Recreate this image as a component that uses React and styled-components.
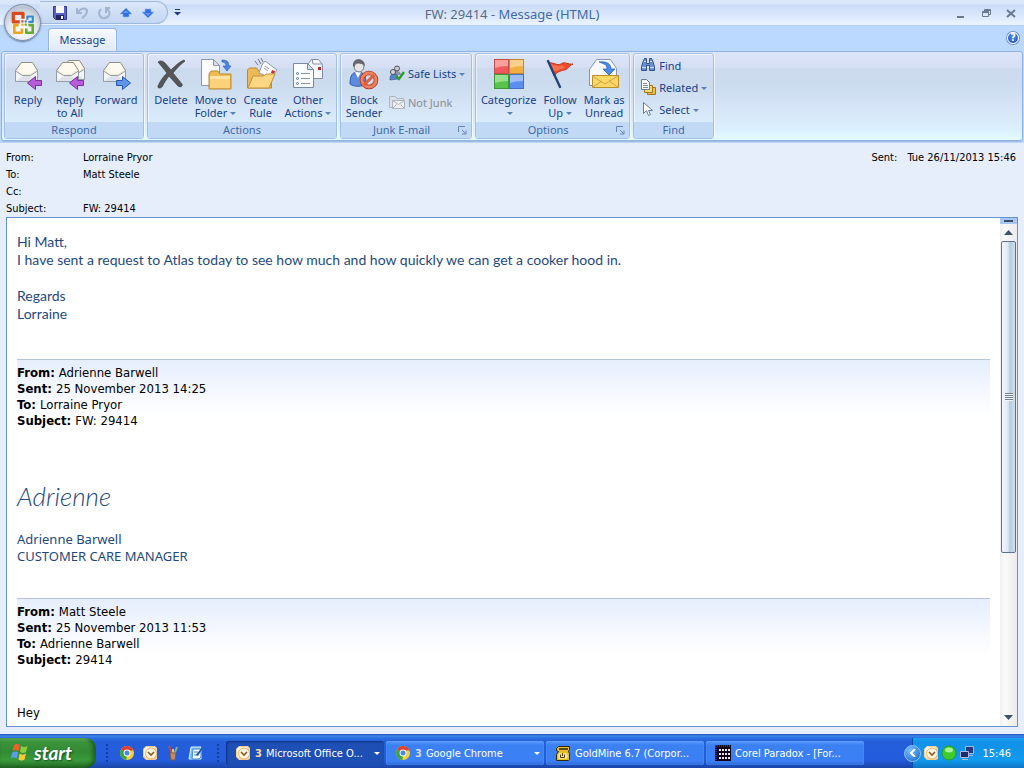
import React from 'react';
import styled, { createGlobalStyle } from 'styled-components';

const GlobalStyle = createGlobalStyle`
  * {
    box-sizing: border-box;
  }

  body {
    background: #e6edfb;
    font-family: 'DejaVu Sans Condensed', 'DejaVu Sans', sans-serif;
    font-size: 11px;
    margin: 0;
  }

  button {
    background: none;
    border: none;
    color: inherit;
    font: inherit;
    margin: 0;
    padding: 0;
  }

  svg {
    display: block;
    flex: none;
  }
`;

const Desktop = styled.div`
  display: flex;
  flex-flow: column nowrap;
  height: 100vh;
  overflow: hidden;
`;

/* Title bar */

const TitleBar = styled.header`
  align-items: center;
  background: linear-gradient(#dbe7fc 0, #dbe6fb 4px, #c9dcf8 5px, #d8e6fc 14px, #e9f2ff 24px);
  border-bottom: 1px solid #b0d0f8;
  display: grid;
  grid-template-columns: 1fr auto 1fr;
  height: 26px;
  position: relative;
`;

const QuickAccess = styled.div`
  align-items: center;
  align-self: start;
  display: flex;
  gap: 6px;
`;

const QuickTools = styled.div`
  align-items: center;
  background: linear-gradient(#dce7f9, #c3d6f2);
  border: 1px solid #9fb9de;
  border-left: none;
  border-radius: 0 12px 12px 0;
  display: flex;
  gap: 6px;
  height: 23px;
  margin-left: 40px;
  margin-top: 1px;
  padding: 0 11px 0 12px;
`;

const OfficeButton = styled.button`
  background: radial-gradient(circle at 50% 70%, #ffffff 0, #e5e9f0 45%, #b9c3d2 75%, #e8edf5 100%);
  border: 1px solid #7b8ca8;
  border-radius: 50%;
  box-shadow: 0 1px 2px rgba(40, 60, 100, 0.6);
  display: grid;
  height: 37px;
  left: 4px;
  place-items: center;
  position: absolute;
  top: 4px;
  width: 37px;
  z-index: 2;
`;

const Title = styled.h1`
  color: #5a6b85;
  font-family: 'Noto Sans', sans-serif;
  font-size: 13px;
  font-weight: 400;
  margin: 0;
  padding-top: 3px;

  span {
    color: #3e6aaa;
  }
`;

const WindowButtons = styled.div`
  display: flex;
  gap: 13px;
  justify-content: flex-end;
  padding-right: 7px;
`;

/* Ribbon */

const TabStrip = styled.div`
  align-items: flex-end;
  background: #bbd9fe;
  display: flex;
  height: 25px;
  justify-content: space-between;
  padding: 0 5px 0 48px;
`;

const Tab = styled.button`
  background: linear-gradient(#f6faff, #dfe9fa);
  border: 1px solid #91b3e6;
  border-bottom: none;
  border-radius: 4px 4px 0 0;
  box-shadow: inset 0 1px 0 1px #ffffff;
  color: #15428b;
  font-family: 'Noto Sans', sans-serif;
  font-size: 11px;
  height: 23px;
  padding-bottom: 2px;
  width: 69px;
`;

const HelpButton = styled.button`
  background: radial-gradient(circle at 50% 35%, #5b93ee, #1546b5);
  border: 1px solid #ffffff;
  border-radius: 50%;
  box-shadow: 0 0 0 1px #6f8fc8;
  color: #ffffff;
  font-size: 10px;
  font-weight: 700;
  height: 12px;
  line-height: 10px;
  margin-bottom: 7px;
  width: 12px;
`;

const Ribbon = styled.nav`
  background: linear-gradient(#dce5f8 0, #d7dff5 15px, #cbdaec 17px, #ccddef 36px, #d5e3f6 52px, #dbf0fe 78px, #e4fbff 88px);
  border: 1px solid #8fb2e3;
  border-radius: 3px;
  box-shadow: 0 1px 1px #9dbce8;
  display: flex;
  gap: 3px;
  height: 90px;
  margin: 0 1px;
  padding: 1px 2px;
`;

const RibbonArea = styled.div`
  background: #bfd9fb;
  padding-bottom: 2px;
`;

const Group = styled.section`
  border: 1px solid #a2bfe4;
  border-radius: 3px;
  box-shadow: inset 1px 1px 0 rgba(255, 255, 255, 0.6), 1px 0 0 rgba(255, 255, 255, 0.6);
  color: #15428b;
  display: flex;
  flex-flow: column nowrap;
  font-family: 'Noto Sans', sans-serif;
  height: 86px;
`;

const GroupBody = styled.div`
  display: flex;
  flex: 1;
  padding: 0 2px;
`;

const GroupLabel = styled.div`
  align-items: center;
  background: #c2d9f6;
  border-radius: 0 0 2px 2px;
  color: #3e6aaa;
  display: flex;
  height: 16px;
  line-height: 16px;
  padding: 0 4px;

  h2 {
    flex: 1;
    font-size: 11px;
    font-weight: 400;
    margin: 0;
    text-align: center;
  }
`;

const BigButton = styled.button`
  align-items: center;
  display: flex;
  flex-flow: column nowrap;
  line-height: 13px;
  padding-top: 4px;
  white-space: nowrap;
  width: ${(props) => props.$width}px;

  svg {
    margin-bottom: 3px;
  }
`;

const SmallColumn = styled.div`
  display: flex;
  flex-flow: column nowrap;
  gap: ${(props) => props.$gap}px;
  padding: ${(props) => props.$top}px 4px 0;
`;

const SmallButton = styled.button`
  align-items: center;
  display: flex;
  gap: 3px;
  height: 22px;
  white-space: nowrap;

  &:disabled {
    color: #8d8d8d;
  }
`;

const Caret = styled.i`
  border: 3px solid transparent;
  border-bottom: none;
  border-top-color: ${(props) => props.$color || '#5a7fb4'};
  display: inline-block;
  margin-left: 3px;
  vertical-align: 2px;
`;

/* Message header */

const MessageHeader = styled.div`
  display: flex;
  justify-content: space-between;
  line-height: 17px;
  padding: 6px 8px 0 6px;
`;

const Fields = styled.dl`
  display: grid;
  grid-auto-rows: 17px;
  grid-template-columns: ${(props) => props.$label}px auto;
  margin: 0;

  dd {
    margin: 0;
  }
`;

/* Message body */

const Reader = styled.main`
  background: #ffffff;
  border: 1px solid #6593cf;
  display: flex;
  flex: 1;
  margin: 0 6px 7px;
  min-height: 0;
`;

const Message = styled.article`
  flex: 1;
  overflow: hidden;
  padding: 15px 10px 0;

  p {
    margin: 0;
  }
`;

const Reply = styled.div`
  color: #1f497d;
  font-family: Lato, sans-serif;
  font-size: 14px;
  line-height: 18px;
  padding-bottom: 36px;

  p + p {
    margin-top: 18px;
  }
`;

const Quoted = styled.dl`
  background: linear-gradient(#e6eefd, #ffffff 56px);
  border-top: 1px solid #b5c4df;
  font-size: 13px;
  line-height: 16px;
  margin: 0;
  padding: 5px 0 0;

  div {
    display: flex;
    gap: 4px;
  }

  dt {
    font-weight: 700;
  }

  dd {
    margin: 0;
  }
`;

const Signature = styled.div`
  color: #1f497d;
  font-family: 'Noto Sans', sans-serif;
  font-size: 13px;
  line-height: 17px;
  padding: 52px 0 33px;
`;

const Handwriting = styled.p`
  font-family: Lato, sans-serif;
  font-size: 26px;
  font-style: italic;
  font-weight: 300;
  line-height: 30px;
  padding-bottom: 20px;
`;

const Plain = styled.p`
  font-size: 13px;
  line-height: 16px;
  padding-top: 37px;
`;

const Scrollbar = styled.div`
  background: linear-gradient(90deg, #f0f0f0, #fbfafa 30%, #ebebeb);
  display: flex;
  flex-flow: column nowrap;
  width: 17px;
`;

const SplitHandle = styled.div`
  background: #a9c7f3;
  height: 6px;
  padding: 2px 4px;

  &::after {
    background: #384c6e;
    content: '';
    display: block;
    height: 2px;
  }
`;

const ScrollArrow = styled.button`
  display: grid;
  height: 17px;
  place-items: center;
`;

const Track = styled.div`
  flex: 1;
`;

const Thumb = styled.div`
  align-items: center;
  background: linear-gradient(90deg, #f2f6fb, #dfe8f2 45%, #b7cbdf 60%, #cfdfee);
  border: 1px solid #5f6f94;
  border-radius: 2px;
  display: flex;
  justify-content: center;
  margin: 0 1px;
`;

const Grip = styled.i`
  background: repeating-linear-gradient(#75808f 0 1px, #f2f6fa 1px 2px);
  height: 8px;
  width: 8px;
`;

/* Taskbar */

const Taskbar = styled.footer`
  background: linear-gradient(#1c54b5 0, #3d85ea 2px, #2b70e0 4px, #245edb 8px, #235cdc 26px, #1a44a6 34px);
  color: #ffffff;
  display: flex;
  height: 34px;
`;

const StartButton = styled.button`
  align-items: center;
  background: linear-gradient(#6fbf6d 0, #3b933b 4px, #328a33 14px, #3a9a3a 22px, #246b25 30px);
  border-radius: 0 10px 10px 0;
  box-shadow: inset -3px 0 4px rgba(10, 60, 15, 0.6);
  display: flex;
  font-family: Lato, sans-serif;
  font-size: 19px;
  font-style: italic;
  font-weight: 700;
  gap: 4px;
  margin-top: 4px;
  padding-bottom: 2px;
  padding-left: 10px;
  text-shadow: 1px 1px 2px #174a18;
  width: 96px;
`;

const QuickLaunch = styled.div`
  align-items: center;
  display: flex;
  gap: 7px;
  padding: 3px 5px 0 9px;
`;

const LaunchIcons = styled.div`
  display: flex;
  gap: 7px;
  padding: 0 5px 0 2px;
`;

const Dots = styled.i`
  background: radial-gradient(circle, #173f9d 1px, transparent 1px) 0 0 / 4px 4px;
  height: 20px;
  width: 5px;
`;

const Tasks = styled.div`
  display: flex;
  flex: 1;
  gap: 2px;
  min-width: 0;
  padding: 7px 40px 3px 0;
`;

const Task = styled.button`
  align-items: center;
  background: ${(props) => (props.$active ? '#1d4fb5' : 'linear-gradient(#5a9bff, #3c81f3 4px, #3b80f4 20px, #2c69d8)')};
  border-radius: 3px;
  box-shadow: ${(props) => (props.$active ? 'inset 1px 1px 2px #0f2f7c' : 'inset 0 0 1px #9fc4ff')};
  display: flex;
  flex: 0 1 158px;
  gap: 4px;
  min-width: 0;
  padding: 0 4px 0 9px;

  b {
    color: ${(props) => (props.$active ? '#f7dca0' : '#d5d9e0')};
  }
`;

const TaskName = styled.span`
  flex: 1;
  overflow: hidden;
  text-align: left;
  white-space: nowrap;
`;

const Tray = styled.div`
  align-items: center;
  background: linear-gradient(#1aa4f0 0, #1290e8 4px, #109bee 22px, #0d73c4 30px);
  border-left: 1px solid #0a4fa8;
  display: flex;
  gap: 2px;
  margin-top: 4px;
  padding-right: 13px;

  time {
    margin-left: 5px;
  }
`;

const TrayToggle = styled.button`
  background: radial-gradient(circle at 35% 30%, #7cc0ff, #1260c8);
  border: 1px solid #8cc6f8;
  border-radius: 50%;
  display: grid;
  height: 17px;
  margin-left: -9px;
  place-items: center;
  width: 17px;
`;

/* Drawings */

function OfficeLogo() {
  return (
    <svg width="26" height="26" viewBox="0 0 24 24" fill="none" strokeLinejoin="round">
      <path d="M9 11H3V3h9v5" stroke="#d8491b" strokeWidth="3" />
      <path d="M16 9V6h5v5h-4" stroke="#2f8ccf" strokeWidth="2" />
      <path d="M8 14H4v7h7v-4" stroke="#eba51c" strokeWidth="2.4" />
      <path d="M15 17v4h6v-7h-4" stroke="#66a832" strokeWidth="2.4" />
      <path d="M11 10h1v1h-1z" stroke="#d8491b" />
      <path d="M14 10h1v1h-1z" stroke="#2f8ccf" />
      <path d="M11 13h1v1h-1z" stroke="#eba51c" />
      <path d="M14 13h1v1h-1z" stroke="#66a832" />
    </svg>
  );
}

function SaveIcon() {
  return (
    <svg width="16" height="16" viewBox="0 0 16 16">
      <path d="M1.5 1.5h13v13h-11l-2-2z" fill="#5a60c4" stroke="#34388f" />
      <path d="M4 1h8v7H4z" fill="#f4f7ff" />
      <path d="M4 10h8v5H4z" fill="#23265f" />
      <path d="M9 11h2v3H9z" fill="#fff" />
    </svg>
  );
}

function UndoIcon() {
  return (
    <svg width="16" height="16" viewBox="0 0 16 16" fill="none" stroke="#a3b4d0" strokeWidth="2">
      <path d="M4 7c4-5 9-4 9-1 0 3-2 5-5 7" />
      <path d="M3 3v5h5" />
    </svg>
  );
}

function RedoIcon() {
  return (
    <svg width="16" height="16" viewBox="0 0 16 16" fill="none" stroke="#a3b4d0" strokeWidth="2">
      <path d="M5 4c-4 4-1 10 4 9 5-1 6-6 2-9" />
      <path d="M14 3h-4v5" />
    </svg>
  );
}

function ArrowIcon({ down }) {
  return (
    <svg width="16" height="16" viewBox="0 0 16 16">
      <g transform={down ? 'rotate(180 8 8)' : undefined}>
        <path d="M8 3l6 6h-3v3H5V9H2z" fill="#2f6fe0" stroke="#8db4f2" strokeWidth=".6" />
        <path d="M8 5l3 3H5z" fill="#5f97f2" />
      </g>
    </svg>
  );
}

function OpenEnvelope({ x = 0, y = 0 }) {
  return (
    <g transform={`translate(${x} ${y})`}>
      <path d="M3.5 12.5l6-8h11l5 8v11h-22z" fill="#f3ead2" stroke="#8f8c80" />
      <path d="M5 12l5-7h10l4 7-6 4h-8z" fill="#fffaf0" />
      <path d="M3.500 13l7 4.500h8l7-4.500v10.500h-22z" fill="#f4f6fa" stroke="#959ca9" />
      <path d="M4 23l7-5h7l7 5z" fill="#dce1ea" />
    </g>
  );
}

function SideArrow({ left }) {
  return left ? (
    <path d="M29.500 22.500v5h-6v4l-8-6.500 8-6.500v4z" fill="#b65cd8" stroke="#7d2ea0" />
  ) : (
    <path d="M16.500 22.500v5h6v4l8-6.500-8-6.500v4z" fill="#5d95ea" stroke="#2757ae" />
  );
}

function ReplyIcon() {
  return (
    <svg width="32" height="32" viewBox="0 0 32 32">
      <OpenEnvelope />
      <SideArrow left />
    </svg>
  );
}

function ReplyAllIcon() {
  return (
    <svg width="32" height="32" viewBox="0 0 32 32">
      <OpenEnvelope x={5} y={-2} />
      <OpenEnvelope x={-1} />
      <SideArrow left />
    </svg>
  );
}

function ForwardIcon() {
  return (
    <svg width="32" height="32" viewBox="0 0 32 32">
      <OpenEnvelope />
      <SideArrow />
    </svg>
  );
}

function DeleteIcon() {
  return (
    <svg width="32" height="32" viewBox="0 0 32 32">
      <path
        d="M3 4c2-2 5-1 7 1l6 7c4-4 8-8 13-10l1 1c-4 3-8 7-12 12l9 11c1 2-1 4-4 2l-9-10c-3 4-5 7-7 11-2 2-5 1-4-1 2-5 5-9 9-13z"
        fill="#54565a"
        stroke="#323438"
        strokeWidth=".6"
      />
    </svg>
  );
}

function Folder({ x, y }) {
  return (
    <g transform={`translate(${x} ${y})`}>
      <path d="M0 4l2-3h7l2 3h11v15H0z" fill="#f0bb52" stroke="#b98a34" />
      <path d="M1 6h20v12H1z" fill="#fbd27a" />
      <path d="M1 6h20v3H1z" fill="#fee4a4" />
    </g>
  );
}

function MoveIcon() {
  return (
    <svg width="32" height="32" viewBox="0 0 32 32">
      <path d="M1.500 1.500h12l6 6v20h-18z" fill="#fbfcfe" stroke="#8b97ab" />
      <path d="M13.500 1.500v6h6z" fill="#d5dde9" stroke="#8b97ab" />
      <Folder x={9} y={12} />
      <path d="M22 2c5 0 7 2 7 6h2l-4 5-4-5h3c0-2-1-4-4-4z" fill="#4a86e4" stroke="#2455ac" strokeWidth=".6" />
    </svg>
  );
}

function CreateRuleIcon() {
  return (
    <svg width="32" height="32" viewBox="0 0 32 32">
      <path d="M2.500 30V12l2-2h7l2 3h13v17z" fill="#eeb957" stroke="#b98a34" />
      <path d="M17 7l3-4 12 9-6 8-12-5z" fill="#fdfdfd" stroke="#9099a8" />
      <path d="M20 8l4 3M19 10l4 3" stroke="#9099a8" />
      <path d="M27 12l3 1-1 3-3-1z" fill="#d02a2a" />
      <path d="M10 3l3 4M13 1l3 5M16 0l2 4" stroke="#6d7583" />
      <path d="M3 30l5-12h11l2-2h9l-6 14z" fill="#fcd683" stroke="#c29236" />
    </svg>
  );
}

function OtherActionsIcon() {
  return (
    <svg width="32" height="32" viewBox="0 0 32 32">
      <path d="M15.500 6.500l4-5h7l4 5v14h-15z" fill="#f7f8fb" stroke="#8190a8" />
      <path d="M20 1l1 5h9" fill="none" stroke="#8190a8" />
      <path d="M26 9h3v3h-3z" fill="#c8252b" />
      <path d="M1.500 5.500h14l6 6v18h-20z" fill="#fcfdff" stroke="#7889a5" />
      <path d="M15.500 5.500v6h6z" fill="#d5dde9" stroke="#7889a5" />
      <path d="M9 15.500h9M9 20.500h9M9 25.500h9" stroke="#8d96a5" />
      <g fill="#fff" stroke="#52719f">
        <circle cx="5.500" cy="15.500" r="1" />
        <circle cx="5.500" cy="20.500" r="1" />
        <circle cx="5.500" cy="25.500" r="1" />
      </g>
    </svg>
  );
}

function BlockSenderIcon() {
  return (
    <svg width="32" height="32" viewBox="0 0 32 32">
      <path d="M2 26c0-8 2-12 8-12s8 4 8 12c-4 3-12 3-16 0z" fill="#5a8de0" stroke="#2e5cae" />
      <path d="M7 14l3 6 3-6z" fill="#fff" />
      <ellipse cx="11" cy="8" rx="5" ry="6" fill="#e6e6e6" stroke="#777" />
      <path d="M5 8c-1-9 12-9 12 0-3-3-8-3-9-2-1 1-1 4-3 2z" fill="#66686c" />
      <g fill="none">
        <circle cx="21" cy="22" r="7" stroke="#b23a20" strokeWidth="4.600" />
        <circle cx="21" cy="22" r="7" stroke="#f0805c" strokeWidth="3" />
        <path d="M16 27l10-10" stroke="#e0603c" strokeWidth="3" />
      </g>
    </svg>
  );
}

function SafeListsIcon() {
  return (
    <svg width="16" height="16" viewBox="0 0 16 16">
      <path d="M5 9c0-4 7-4 7 1H6z" fill="#8a94a8" />
      <circle cx="8" cy="3.500" r="2.500" fill="#c9ccd2" stroke="#4d5058" />
      <path d="M1 15c0-5 1-6 4-6s4 1 4 5z" fill="#5783cb" stroke="#2c4d8c" strokeWidth=".6" />
      <circle cx="4" cy="7" r="2.500" fill="#d6d8dc" stroke="#4d5058" />
      <path d="M7 11l3 3 5-7" fill="none" stroke="#2b9d2b" strokeWidth="2.400" />
    </svg>
  );
}

function NotJunkIcon() {
  return (
    <svg width="16" height="16" viewBox="0 0 16 16" fill="#dce1e9" stroke="#aeb5c1">
      <path d="M.5 13.500v-11h6l1 2h7v9z" />
      <path d="M3.500 6.500h12v8h-12z" fill="#edf0f4" />
      <path d="M3.500 6.500l6 4 6-4M3.500 14.500l4-4M15.500 14.500l-4-4" fill="none" />
    </svg>
  );
}

const swatches = [
  [1, 1, '#f0595b', '#f9a09c', '#c0504e'],
  [16, 1, '#f2ae43', '#f9d08b', '#c08a35'],
  [1, 16, '#56c44c', '#97e08c', '#43953c'],
  [16, 16, '#5a8ff0', '#9cbdf8', '#4370bf'],
];

function CategorizeIcon() {
  return (
    <svg width="32" height="32" viewBox="0 0 32 32">
      {swatches.map(([x, y, fill, shine, edge]) => (
        <g key={fill}>
          <rect x={x + 0.5} y={y + 0.5} width="14" height="14" fill={fill} stroke={edge} />
          <path d={`M${x + 1} ${y + 1}h13v6q-7 0-13 2z`} fill={shine} />
        </g>
      ))}
    </svg>
  );
}

function FollowUpIcon() {
  return (
    <svg width="32" height="32" viewBox="0 0 32 32">
      <path d="M5 5c4-1 8 3 12 1 4-3 7 1 12 0-5 2-5 6-9 6-4 1-7 2-10 6z" fill="#ee4b2c" stroke="#c43a20" />
      <path d="M6 6c5 1 8 3 12 1l3 3c-4 1-7 2-12 4z" fill="#fb7d5c" opacity=".7" />
      <path d="M4 3l12 26" stroke="#27436f" strokeWidth="2.400" strokeLinecap="round" />
    </svg>
  );
}

function UnreadIcon() {
  return (
    <svg width="32" height="32" viewBox="0 0 32 32">
      <path d="M1.500 11.500l7-10h14l6 9v17h-27z" fill="#f7f9fd" stroke="#8896ad" />
      <path d="M4.500 17.500h26v12h-26z" fill="#fbd765" stroke="#bb8f28" />
      <path d="M4 18l13 8 13-8M5 29l9-6M30 29l-9-6" fill="none" stroke="#cfa548" />
      <path d="M11 4c8-1 12 2 12 7h4l-6 6-6-6h4c0-4-2-5-8-7z" fill="#4a8ae8" stroke="#2558b0" strokeWidth=".7" />
    </svg>
  );
}

function FindIcon() {
  return (
    <svg width="16" height="16" viewBox="0 0 16 16" fill="#6b8fc9" stroke="#2f5190">
      <path d="M3.500 3.500l1-2h2v5h3v-5h2l1 2 2 6v4h-5v-5h-3v5h-5v-4z" />
      <path d="M2 10.500h4M10 10.500h4M4 4.500h2M10 4.500h2" stroke="#d5e3fa" />
    </svg>
  );
}

function RelatedIcon() {
  return (
    <svg width="16" height="16" viewBox="0 0 16 16">
      <path d="M7.500 8.500h8v7h-8z" fill="#f3c14d" stroke="#a0741a" />
      <path d="M4.500 6.500h8v7h-8z" fill="#f9d876" stroke="#a0741a" />
      <path d="M1.500.5h5l3 3v7h-8z" fill="#fff" stroke="#6a7a95" />
      <path d="M3 4.500h4M3 6.500h5M3 8.500h5" stroke="#7c8aa2" />
    </svg>
  );
}

function SelectIcon() {
  return (
    <svg width="16" height="16" viewBox="0 0 16 16">
      <path d="M3.500 1.500v11l3-3 2 5 2-1-2-4h4z" fill="#fff" stroke="#6b7b96" />
    </svg>
  );
}

function LauncherIcon() {
  return (
    <svg width="9" height="9" viewBox="0 0 9 9" fill="none" stroke="#6685b5">
      <path d="M.5 6V.5H7M4 4l3.500 3.500M8 4.500v3.500H4" />
    </svg>
  );
}

function WindowsLogo() {
  return (
    <svg width="20" height="20" viewBox="0 0 20 20">
      <path d="M4 3c2-1.500 4-1.500 6 0L8.500 9c-2-1.500-4-1.500-6 0z" fill="#f0602c" />
      <path d="M11 4c2 1.500 4 1.500 6.500 0L16 10c-2 1.500-4.500 1-6 0z" fill="#8ccf3c" />
      <path d="M2.200 10.500c2-1.500 4-1.500 6 0l-1.500 6c-2-1.500-4-1.500-6 0z" fill="#5a9df0" />
      <path d="M9.500 11.500c2 1.500 4 1.500 6.500 0l-1.500 6c-2 1.500-4.500 1-6 0z" fill="#fbcb35" />
    </svg>
  );
}

function ChromeIcon() {
  return (
    <svg width="16" height="16" viewBox="0 0 16 16">
      <circle cx="8" cy="8" r="7" fill="#f8cf3a" />
      <path d="M8 8L2 4.400A7 7 0 0 1 14.600 5.500H8z" fill="#e0402f" />
      <path d="M8 8L2 4.400A7 7 0 0 0 7.500 15z" fill="#3ba34c" />
      <circle cx="8" cy="8" r="3.400" fill="#fff" />
      <circle cx="8" cy="8" r="2.500" fill="#4a88e8" />
    </svg>
  );
}

function OutlookIcon() {
  return (
    <svg width="16" height="16" viewBox="0 0 16 16">
      <path d="M1 4l3-3h9l2 2v11l-2 1H4l-3-3z" fill="#f6cf95" />
      <path d="M2 4l2-2h8l1 2-9 9-2-2z" fill="#fff3da" />
      <circle cx="9" cy="8.500" r="5.500" fill="#fff5de" stroke="#e6b36c" />
      <path d="M6 7l3 3 3-3" fill="none" stroke="#8a5a22" strokeWidth="1.600" />
    </svg>
  );
}

function BrushesIcon() {
  return (
    <svg width="16" height="16" viewBox="0 0 16 16" fill="none" strokeWidth="2">
      <path d="M4 1l3 9" stroke="#c84a3c" />
      <path d="M8 4v6" stroke="#e2c08f" />
      <path d="M12 2L9 10" stroke="#8db46c" />
      <path d="M5 8h6l-1 7H6z" fill="#c08a6c" stroke="#855a42" strokeWidth="1" />
    </svg>
  );
}

function DesktopIcon() {
  return (
    <svg width="16" height="16" viewBox="0 0 16 16">
      <path d="M3 2h10v12H1z" fill="#74c0f4" stroke="#d9f0ff" />
      <path d="M5 4h8v8l-2 2H4z" fill="#f4faff" stroke="#3f86c8" />
      <path d="M6 7h4M6 10h3" stroke="#3f86c8" />
      <path d="M8 10l6-8 1 1-5 8z" fill="#24579d" />
    </svg>
  );
}

function GoldMineIcon() {
  return (
    <svg width="16" height="16" viewBox="0 0 16 16">
      <path d="M1.500 3.500l2-2h11v3l-1 2 1 2v6l-1 1h-12v-6l2-3-2-1z" fill="#e8bd2c" stroke="#30270c" />
      <path d="M4 4h9" stroke="#5c4a14" strokeWidth="2" />
      <path d="M4 8h7l2 3-2 3H4l-1-3z" fill="#fbea91" />
      <path d="M5.500 9.500v3h4v-3M7.500 8v3" fill="none" stroke="#4a3a0c" />
    </svg>
  );
}

function ParadoxIcon() {
  return (
    <svg width="16" height="16" viewBox="0 0 16 16">
      <path d="M0 0h16v16H0z" fill="#0b0618" />
      <path d="M0 1h16M1 0v16" stroke="#4a1f9a" strokeWidth="2" strokeDasharray="1 1" />
      <path d="M4 5h11M4 9h11M4 13h11" stroke="#f6e6ea" strokeWidth="2" strokeDasharray="2 1" />
    </svg>
  );
}

function NetworkIcon() {
  return (
    <svg width="16" height="16" viewBox="0 0 16 16" stroke="#a9bade">
      <path d="M6.500 1.500h8v7h-8z" fill="#25377f" />
      <path d="M1.500 6.500h8v6h-8z" fill="#1d2b68" />
      <path d="M3 14.500h6M10 10.500h4" />
    </svg>
  );
}

function OnlineIcon() {
  return (
    <svg width="16" height="16" viewBox="0 0 16 16">
      <circle cx="8" cy="8" r="7" fill="#3ccc2c" stroke="#2a9a2a" />
      <ellipse cx="8" cy="5" rx="4" ry="2.500" fill="#a6f295" />
    </svg>
  );
}

/* Parts */

function RibbonGroup({ name, launcher, children }) {
  return (
    <Group>
      <GroupBody>{children}</GroupBody>
      <GroupLabel>
        <h2>{name}</h2>
        {launcher && (
          <button type="button" aria-label={`${name} settings`}>
            <LauncherIcon />
          </button>
        )}
      </GroupLabel>
    </Group>
  );
}

function Big({ icon, lines, width, menu }) {
  return (
    <BigButton type="button" $width={width}>
      {icon}
      {lines.map((line, i) => (
        <span key={line}>
          {line}
          {menu && i === lines.length - 1 && <Caret />}
        </span>
      ))}
    </BigButton>
  );
}

function QuotedHeader({ from, sent, to, subject }) {
  return (
    <Quoted>
      <div>
        <dt>From:</dt>
        <dd>{from}</dd>
      </div>
      <div>
        <dt>Sent:</dt>
        <dd>{sent}</dd>
      </div>
      <div>
        <dt>To:</dt>
        <dd>{to}</dd>
      </div>
      <div>
        <dt>Subject:</dt>
        <dd>{subject}</dd>
      </div>
    </Quoted>
  );
}

const tasks = [
  { name: 'Microsoft Office O...', count: 3, icon: <OutlookIcon />, active: true },
  { name: 'Google Chrome', count: 3, icon: <ChromeIcon /> },
  { name: 'GoldMine 6.7 (Corpor...', icon: <GoldMineIcon /> },
  { name: 'Corel Paradox - [For...', icon: <ParadoxIcon /> },
];

export default function App() {
  return (
    <Desktop>
      <GlobalStyle />

      <TitleBar>
        <OfficeButton type="button" aria-label="Office">
          <OfficeLogo />
        </OfficeButton>
        <QuickAccess>
          <QuickTools>
            <button type="button" aria-label="Save"><SaveIcon /></button>
            <button type="button" aria-label="Undo"><UndoIcon /></button>
            <button type="button" aria-label="Redo"><RedoIcon /></button>
            <button type="button" aria-label="Previous item"><ArrowIcon /></button>
            <button type="button" aria-label="Next item"><ArrowIcon down /></button>
          </QuickTools>
          <button type="button" aria-label="Customize toolbar">
            <svg width="7" height="7" viewBox="0 0 7 7" fill="#1e3f7a">
              <path d="M1 0h5v1H1zM0 3h7L3.500 6.500z" />
            </svg>
          </button>
        </QuickAccess>
        <Title>
          FW: 29414 - <span>Message (HTML)</span>
        </Title>
        <WindowButtons>
          <button type="button" aria-label="Minimize">
            <svg width="12" height="12" viewBox="0 0 12 12"><path d="M2 9h7v2H2z" fill="#69788f" /></svg>
          </button>
          <button type="button" aria-label="Restore">
            <svg width="12" height="12" viewBox="0 0 12 12" fill="none" stroke="#69788f">
              <path d="M4.500 4V2.500h6v5H9M2.500 4.500h6v5h-6zM2 5.500h7M4 3.500h7" />
            </svg>
          </button>
          <button type="button" aria-label="Close">
            <svg width="12" height="12" viewBox="0 0 12 12" stroke="#69788f" strokeWidth="2">
              <path d="M2 3l8 7M10 3l-8 7" />
            </svg>
          </button>
        </WindowButtons>
      </TitleBar>

      <TabStrip>
        <Tab type="button">Message</Tab>
        <HelpButton type="button" aria-label="Help">?</HelpButton>
      </TabStrip>

      <RibbonArea>
        <Ribbon>
          <RibbonGroup name="Respond">
            <Big icon={<ReplyIcon />} lines={['Reply']} width={42} />
            <Big icon={<ReplyAllIcon />} lines={['Reply', 'to All']} width={42} />
            <Big icon={<ForwardIcon />} lines={['Forward']} width={50} />
          </RibbonGroup>
          <RibbonGroup name="Actions">
            <Big icon={<DeleteIcon />} lines={['Delete']} width={42} />
            <Big icon={<MoveIcon />} lines={['Move to', 'Folder']} width={47} menu />
            <Big icon={<CreateRuleIcon />} lines={['Create', 'Rule']} width={43} />
            <Big icon={<OtherActionsIcon />} lines={['Other', 'Actions']} width={52} menu />
          </RibbonGroup>
          <RibbonGroup name="Junk E-mail" launcher>
            <Big icon={<BlockSenderIcon />} lines={['Block', 'Sender']} width={42} />
            <SmallColumn $top={8} $gap={7}>
              <SmallButton type="button">
                <SafeListsIcon />
                <span>Safe Lists<Caret /></span>
              </SmallButton>
              <SmallButton type="button" disabled>
                <NotJunkIcon />
                Not Junk
              </SmallButton>
            </SmallColumn>
          </RibbonGroup>
          <RibbonGroup name="Options" launcher>
            <BigButton type="button" $width={61}>
              <CategorizeIcon />
              <span>Categorize</span>
              <span><Caret /></span>
            </BigButton>
            <Big icon={<FollowUpIcon />} lines={['Follow', 'Up']} width={42} menu />
            <Big icon={<UnreadIcon />} lines={['Mark as', 'Unread']} width={46} />
          </RibbonGroup>
          <RibbonGroup name="Find">
            <SmallColumn $top={0} $gap={0}>
              <SmallButton type="button">
                <FindIcon />
                Find
              </SmallButton>
              <SmallButton type="button">
                <RelatedIcon />
                <span>Related<Caret /></span>
              </SmallButton>
              <SmallButton type="button">
                <SelectIcon />
                <span>Select<Caret /></span>
              </SmallButton>
            </SmallColumn>
          </RibbonGroup>
        </Ribbon>
      </RibbonArea>

      <MessageHeader>
        <Fields $label={77}>
          <dt>From:</dt>
          <dd>Lorraine Pryor</dd>
          <dt>To:</dt>
          <dd>Matt Steele</dd>
          <dt>Cc:</dt>
          <dd />
          <dt>Subject:</dt>
          <dd>FW: 29414</dd>
        </Fields>
        <Fields $label={36}>
          <dt>Sent:</dt>
          <dd>Tue 26/11/2013 15:46</dd>
        </Fields>
      </MessageHeader>

      <Reader>
        <Message>
          <Reply>
            <p>
              Hi Matt,
              <br />
              I have sent a request to Atlas today to see how much and how quickly we can get a cooker hood in.
            </p>
            <p>
              Regards
              <br />
              Lorraine
            </p>
          </Reply>
          <QuotedHeader from="Adrienne Barwell" sent="25 November 2013 14:25" to="Lorraine Pryor" subject="FW: 29414" />
          <Signature>
            <Handwriting>Adrienne</Handwriting>
            <p>Adrienne Barwell</p>
            <p>CUSTOMER CARE MANAGER</p>
          </Signature>
          <QuotedHeader from="Matt Steele" sent="25 November 2013 11:53" to="Adrienne Barwell" subject="29414" />
          <Plain>Hey</Plain>
        </Message>
        <Scrollbar>
          <SplitHandle />
          <ScrollArrow type="button" aria-label="Scroll up">
            <svg width="9" height="5" viewBox="0 0 9 5"><path d="M0 5l4.500-5L9 5z" fill="#40506f" /></svg>
          </ScrollArrow>
          <Track>
            <Thumb style={{ height: `${(2 / 3) * 100}%` }}>
              <Grip />
            </Thumb>
          </Track>
          <ScrollArrow type="button" aria-label="Scroll down">
            <svg width="9" height="5" viewBox="0 0 9 5"><path d="M0 0l4.500 5L9 0z" fill="#40506f" /></svg>
          </ScrollArrow>
        </Scrollbar>
      </Reader>

      <Taskbar>
        <StartButton type="button">
          <WindowsLogo />
          start
        </StartButton>
        <QuickLaunch>
          <Dots />
          <LaunchIcons>
            <button type="button" aria-label="Chrome"><ChromeIcon /></button>
            <button type="button" aria-label="Outlook"><OutlookIcon /></button>
            <button type="button" aria-label="Paint tools"><BrushesIcon /></button>
            <button type="button" aria-label="Show desktop"><DesktopIcon /></button>
          </LaunchIcons>
          <Dots />
        </QuickLaunch>
        <Tasks>
          {tasks.map((task) => (
            <Task key={task.name} type="button" $active={task.active}>
              {task.icon}
              {task.count && <b>{task.count}</b>}
              <TaskName>{task.name}</TaskName>
              {task.count && <Caret $color="#ffffff" />}
            </Task>
          ))}
        </Tasks>
        <Tray>
          <TrayToggle type="button" aria-label="Show hidden icons">
            <svg width="8" height="8" viewBox="0 0 8 8" fill="none" stroke="#fff" strokeWidth="2">
              <path d="M6 0L2 4l4 4" />
            </svg>
          </TrayToggle>
          <OutlookIcon />
          <OnlineIcon />
          <NetworkIcon />
          <time>15:46</time>
        </Tray>
      </Taskbar>
    </Desktop>
  );
}
